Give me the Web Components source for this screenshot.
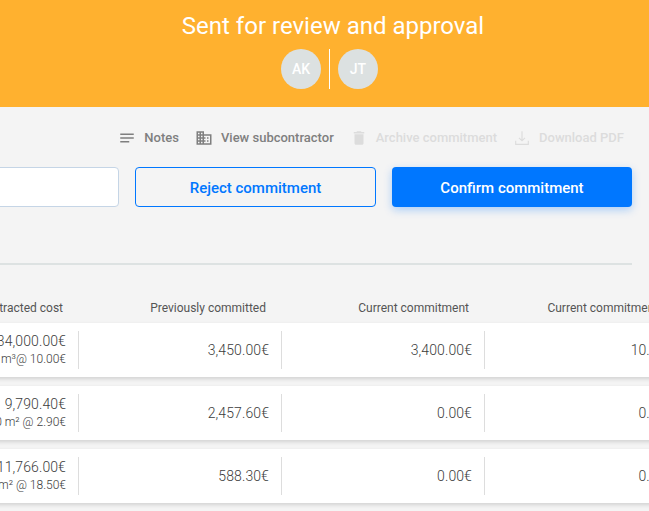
<!DOCTYPE html>
<html lang="en"><head><meta charset="utf-8"><title>Commitment</title>
<style>
html,body{margin:0;padding:0;height:100%;overflow:hidden;background:#f4f4f4;font-family:Roboto,"Liberation Sans",sans-serif}
</style></head><body>
<commit-page>
  <status-banner heading="Sent for review and approval">
    <user-avatar>AK</user-avatar><user-avatar>JT</user-avatar>
  </status-banner>
  <action-bar>
    <action-link icon="notes">Notes</action-link>
    <action-link icon="domain">View subcontractor</action-link>
    <action-link icon="delete" disabled>Archive commitment</action-link>
    <action-link icon="download" disabled>Download PDF</action-link>
  </action-bar>
  <button-row>
    <commit-button variant="blank"></commit-button>
    <commit-button variant="outline">Reject commitment</commit-button>
    <commit-button variant="primary">Confirm commitment</commit-button>
  </button-row>
  <commit-table>
    <table-head><span>Contracted cost</span><span>Previously committed</span><span>Current commitment</span><span>Current commitment %</span></table-head>
    <table-row><table-cell sub="3,400.00 m³@ 10.00€">34,000.00€</table-cell><table-cell>3,450.00€</table-cell><table-cell>3,400.00€</table-cell><table-cell>10.00%</table-cell></table-row>
    <table-row><table-cell sub="3,376.00 m² @ 2.90€">9,790.40€</table-cell><table-cell>2,457.60€</table-cell><table-cell>0.00€</table-cell><table-cell>0.00%</table-cell></table-row>
    <table-row><table-cell sub="636.00 m² @ 18.50€">11,766.00€</table-cell><table-cell>588.30€</table-cell><table-cell>0.00€</table-cell><table-cell>0.00%</table-cell></table-row>
  </commit-table>
</commit-page>
<script>
const def=(name,css,html,extra)=>{customElements.define(name,class extends HTMLElement{
  constructor(){super();const r=this.attachShadow({mode:'open'});r.innerHTML=`<style>${css}</style>${typeof html==='function'?html(this):html}`;}
  connectedCallback(){if(extra)extra(this);}
});};
const ICONS={
 notes:'<path d="M3 6h18v2H3zM3 11h18v2H3zM3 16h12v2H3z"/>',
 domain:'<path d="M12 7V3H2v18h20V7H12zM6 19H4v-2h2v2zm0-4H4v-2h2v2zm0-4H4V9h2v2zm0-4H4V5h2v2zm4 12H8v-2h2v2zm0-4H8v-2h2v2zm0-4H8V9h2v2zm0-4H8V5h2v2zm10 12h-8v-2h2v-2h-2v-2h2v-2h-2V9h8v10zm-2-8h-2v2h2v-2zm0 4h-2v2h2v-2z"/>',
 delete:'<path d="M6 19c0 1.1.9 2 2 2h8c1.1 0 2-.9 2-2V7H6v12zM19 4h-3.5l-1-1h-5l-1 1H5v2h14V4z"/>',
 download:'<path fill="none" stroke="currentColor" stroke-width="1.5" d="M12 3v12.5M8 11.7l4 4 4-4M3.6 15.5v5h16.8v-5"/>'
};
def('commit-page',':host{display:block;width:649px;height:511px;overflow:hidden}','<slot></slot>');
def('status-banner',`:host{display:flex;flex-direction:column;align-items:center;width:666px;height:107px;background:#ffb12f;color:#fff;box-sizing:border-box;padding-top:11px}
 h1{margin:0;font:400 24px/30px Roboto,sans-serif;white-space:nowrap}
 .who{display:flex;align-items:stretch;margin:8px 7px 0 0;gap:8px}
 .sep{width:1px;background:#fff}`,
 el=>`<h1>${el.getAttribute('heading')}</h1><div class="who"><slot name="a"></slot><span class="sep"></span><slot name="b"></slot></div>`,
 el=>{const k=el.querySelectorAll('user-avatar');k[0].slot='a';k[1].slot='b';});
def('user-avatar',`:host{display:flex;width:40px;height:40px;border-radius:50%;background:#dce1e1;color:#fff;font:500 14px/40px Roboto,sans-serif;justify-content:center}`,'<slot></slot>');
def('action-bar',`:host{display:flex;justify-content:flex-end;gap:16px;padding:22px 25px 0 0;height:18px}`,'<slot></slot>');
def('action-link',`:host{display:flex;align-items:center;gap:8px;color:#7f7f7f;font:500 13px/18px Roboto,sans-serif;white-space:nowrap}
 :host([disabled]){color:#dcdcdc}
 svg{width:18px;height:18px;fill:currentColor;display:block}`,
 el=>`<svg viewBox="0 0 24 24" aria-hidden="true">${ICONS[el.getAttribute('icon')]}</svg><slot></slot>`);
def('button-row',`:host{display:flex;justify-content:flex-end;gap:16px;padding:20px 17px 0 0}`,'<slot></slot>');
def('commit-button',`:host{flex:none;display:flex;align-items:center;justify-content:center;box-sizing:border-box;width:241px;height:40px;padding-top:2px;border-radius:4px;font:500 15px/20px Roboto,sans-serif;white-space:nowrap}
 :host([variant=blank]){background:#fff;border:1px solid #c5d5e6}
 :host([variant=outline]){border:1px solid #0077ff;color:#0077ff}
 :host([variant=primary]){width:240px;background:#0077ff;color:#fff;box-shadow:0 3px 8px rgba(0,119,255,.3)}`,'<slot></slot>');
def('commit-table',`:host{display:block;margin:56px 0 0 -124px;width:1100px}
 .rule{height:2px;background:#dde2e2;width:756px}`,'<div class="rule"></div><slot></slot>');
def('table-head',`:host{display:grid;grid-template-columns:repeat(4,203px);padding-top:35px;height:23px;color:#555;font:400 12px/16px Roboto,sans-serif;text-align:right}
 ::slotted(span){padding-right:16px;white-space:nowrap}
 ::slotted(span:last-child){padding-right:18px}`,'<slot></slot>');
def('table-row',`:host{display:grid;grid-template-columns:repeat(4,203px);align-items:center;height:54px;margin-bottom:9px;background:#fff;box-shadow:0 2px 4px rgba(0,0,0,.14)}`,'<slot></slot>');
def('table-cell',`:host{display:flex;flex-direction:column;justify-content:center;align-items:flex-end;box-sizing:border-box;height:38px;padding-right:12px;border-right:1px solid #ddd;color:#3c3c3c;font:300 14px/19px Roboto,sans-serif;letter-spacing:.1px;white-space:nowrap}
 :host(:last-child){border-right:0}
 small{font:300 12px/16px Roboto,sans-serif;letter-spacing:0;margin-bottom:2px}`,
 el=>`<span><slot></slot></span>${el.hasAttribute('sub')?`<small>${el.getAttribute('sub')}</small>`:''}`);
</script>
</body></html>
